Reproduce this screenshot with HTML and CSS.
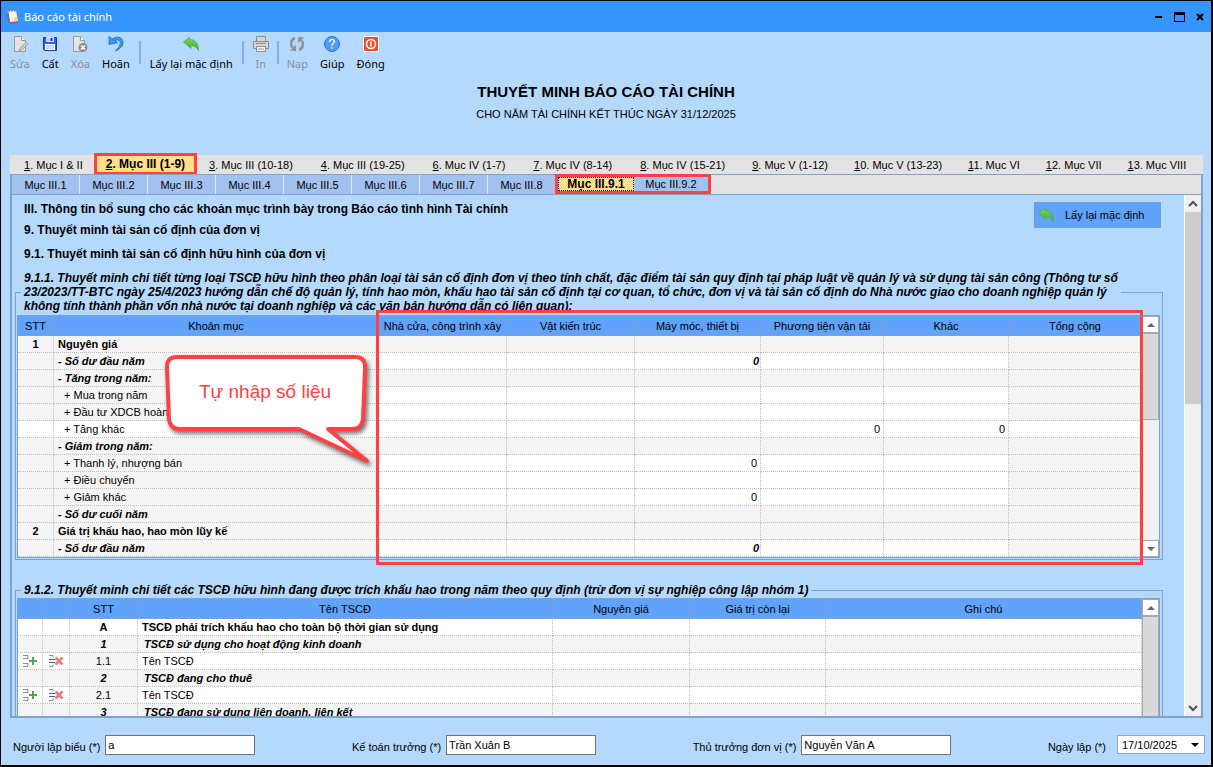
FILE: index.html
```html
<!DOCTYPE html>
<html lang="vi">
<head>
<meta charset="utf-8">
<title>Báo cáo tài chính</title>
<link rel="stylesheet" href="styles.css">
</head>
<body>
<svg class="defs" aria-hidden="true">
  <defs>
    <linearGradient id="green" x1="0" y1="0" x2="0" y2="1"><stop offset="0" stop-color="#7fd85a"/><stop offset="1" stop-color="#3fa83a"/></linearGradient>
    <symbol id="reply" viewBox="0 0 16 16"><path d="M.5 6 6.500 1.200v2.300C12 3.500 15.500 7 15.500 14.500 13.500 10.800 11 9.700 8 9.700V12.500z" fill="url(#green)" stroke="#4caf45" stroke-width=".8"/></symbol>
    <symbol id="row-add" viewBox="0 0 16 14"><path d="M1 1.500h5v3H1M1 9.500h5v3H1" fill="none" stroke="#8b8b8b"/><path d="M7 7h8M11 3v8" stroke="#4aa85a" stroke-width="2"/></symbol>
    <symbol id="row-del" viewBox="0 0 16 14"><path d="M1 1.500h4v2M1 12.500h4v-2" fill="none" stroke="#8b8b8b"/><path d="M1 5.500h6M1 8.500h6" stroke="#3b5fb5"/><path d="m7.500 3.500 7 7m0-7-7 7" stroke="#ee7b7b" stroke-width="2.600"/></symbol>
    <symbol id="up" viewBox="0 0 8 4"><path d="M0 4 4 0l4 4z" fill="#666"/></symbol>
    <symbol id="down" viewBox="0 0 8 4"><path d="M0 0h8L4 4z" fill="#666"/></symbol>
  </defs>
</svg>
<div class="window">
  <header class="titlebar">
    <svg width="14" height="16" viewBox="0 0 14 16"><path d="m1 3 2 11 3 1 8-1-2-10z" fill="#8463b5"/><path d="m2 2 9-.5L13 12l-8 1z" fill="#fff8e2"/><path d="m2 2 2 10 1 1L3.500 3z" fill="#4470c4"/><path d="m9 9 3-1 .8 4-3 .5z" fill="#f3d675"/><path d="M4 3V.5M7 3V.5M10 3V.5" stroke="#7d6b54"/></svg>
    <h1 class="titlebar-text">Báo cáo tài chính</h1>
    <div class="window-buttons">
      <button aria-label="Thu nhỏ"><svg width="12" height="12"><path d="M3 6h7" stroke="#000" stroke-width="2"/></svg></button>
      <button aria-label="Phóng to"><svg width="12" height="12"><path d="M1.500 1.500h10v9h-10z" fill="none" stroke="#000"/><path d="M1 2.500h11" stroke="#000" stroke-width="3"/></svg></button>
      <button aria-label="Đóng cửa sổ"><svg width="12" height="12"><path d="m3 3 6 6m0-6L3 9" stroke="#000" stroke-width="2.200"/></svg></button>
    </div>
  </header>

  <nav class="toolbar">
    <button disabled><svg width="16" height="16"><path d="M2.500.5h7l4 4v11h-11z" fill="#e4e4e4" stroke="#999"/><path d="M9.500.5v4h4" fill="#fff" stroke="#999"/><path d="m7 15 1-3 6-6 2 2-6 6z" fill="#c9c9c9" stroke="#999" stroke-width=".7"/></svg>Sửa</button>
    <button><svg width="16" height="16"><path d="M1.500 1.500h13v13h-12l-1-1z" fill="#2d62e8" stroke="#1237bd"/><path d="M4 1h8v5H4z" fill="#c7d6f5"/><path d="M8.500 2h2v3h-2z" fill="#1237bd"/><path d="M3 8h10v6H3z" fill="#fff"/><path d="M4 10h8M4 12h8" stroke="#9fb4df"/></svg>Cất</button>
    <button disabled><svg width="16" height="16"><path d="M1.500.5h7l4 4v11h-11z" fill="#e4e4e4" stroke="#999"/><path d="M8.500.5v4h4" fill="#fff" stroke="#999"/><circle cx="11" cy="11.500" r="4.500" fill="#8c8c8c"/><path d="m9 9.500 4 4m0-4-4 4" stroke="#fff" stroke-width="1.500"/></svg>Xóa</button>
    <button><svg width="16" height="16"><path d="M1 .5v8l8.500-1.800-2.600-1.900C10 2.800 13 5 12 8.500c-.6 2.500-2.500 4-4.500 6.500C12 13 15 10 15 6.500 15 .8 8.500-.2 4.300 3z" fill="#3a9bea" stroke="#1c68b8" stroke-width=".8"/></svg>Hoãn</button>
    <span class="divider wide"></span>
    <button><svg width="16" height="16"><use href="#reply"/></svg>Lấy lại mặc định</button>
    <span class="divider wide"></span>
    <button disabled><svg width="16" height="16"><path d="M3.500.5h9v5h-9zM.5 5.500h15v7H.5z" fill="#d4d4d4" stroke="#8d8d8d"/><path d="M3 7.500h10" stroke="#8d8d8d"/><path d="M3.500 10.500h9v5h-9z" fill="#f5f5f5" stroke="#8d8d8d"/><path d="M5 13h6" stroke="#999"/></svg>In</button>
    <span class="divider"></span>
    <button disabled><svg width="16" height="16"><path d="M6 2C1.500 3.500 1 9 4 12M10 14c4.500-1.500 5-7 2-10" fill="none" stroke="#929292" stroke-width="2.400"/><path d="M.8 14.500 7 15V9zM15.200 1.500 9 1v6z" fill="#929292"/></svg>Nạp</button>
    <button><svg width="16" height="16"><circle cx="8" cy="8" r="7.500" fill="#519cf2" stroke="#2877d5"/><path d="M5.700 6C5.800 2.500 10.500 2.700 10.300 5.600 10.200 7.400 8 7.500 8 9.800M8 11.200v1.600" fill="none" stroke="#fff" stroke-width="1.300"/></svg>Giúp</button>
    <button><svg width="16" height="16"><rect x=".5" y=".5" width="15" height="15" rx="1.500" fill="#e4512b" stroke="#fff"/><circle cx="8" cy="8" r="4.500" fill="none" stroke="#fff" stroke-width="1.500"/><path d="M8 5.500v5" stroke="#fff" stroke-width="1.600"/></svg>Đóng</button>
  </nav>

  <div class="report-title">
    <h2>THUYẾT MINH BÁO CÁO TÀI CHÍNH</h2>
    <p>CHO NĂM TÀI CHÍNH KẾT THÚC NGÀY 31/12/2025</p>
  </div>

  <main class="report">
    <nav class="tabs">
      <button><u>1</u>. Mục I &amp; II</button>
      <button class="active"><u>2</u>. Mục III (1-9)</button>
      <button><u>3</u>. Mục III (10-18)</button>
      <button><u>4</u>. Mục III (19-25)</button>
      <button><u>6</u>. Mục IV (1-7)</button>
      <button><u>7</u>. Mục IV (8-14)</button>
      <button><u>8</u>. Mục IV (15-21)</button>
      <button class="narrow"><u>9</u>. Mục V (1-12)</button>
      <button class="narrow"><u>1</u>0. Mục V (13-23)</button>
      <button class="narrow"><u>1</u>1. Mục VI</button>
      <button class="narrow"><u>1</u>2. Mục VII</button>
      <button class="narrow"><u>1</u>3. Mục VIII</button>
    </nav>
    <section class="pane">
      <nav class="subtabs">
        <button>Mục III.1</button>
        <button>Mục III.2</button>
        <button>Mục III.3</button>
        <button>Mục III.4</button>
        <button>Mục III.5</button>
        <button>Mục III.6</button>
        <button>Mục III.7</button>
        <button>Mục III.8</button>
        <div class="marked">
          <button class="active">Mục III.9.1</button>
          <button>Mục III.9.2</button>
        </div>
      </nav>
      <div class="viewport">
        <div class="content">
          <div class="intro">
            <div class="headings">
              <h3>III. Thông tin bổ sung cho các khoản mục trình bày trong Báo cáo tình hình Tài chính</h3>
              <h3>9. Thuyết minh tài sản cố định của đơn vị</h3>
              <h3 class="spaced">9.1. Thuyết minh tài sản cố định hữu hình của đơn vị</h3>
            </div>
            <button class="reset"><svg width="16" height="16"><use href="#reply"/></svg><span>Lấy lại mặc định</span></button>
          </div>

          <fieldset class="group">
            <legend>9.1.1. Thuyết minh chi tiết từng loại TSCĐ hữu hình theo phân loại tài sản cố định đơn vị theo tính chất, đặc điểm tài sản quy định tại pháp luật về quản lý và sử dụng tài sản công (Thông tư số<br>23/2023/TT-BTC ngày 25/4/2023 hướng dẫn chế độ quản lý, tính hao mòn, khấu hao tài sản cố định tại cơ quan, tổ chức, đơn vị và tài sản cố định do Nhà nước giao cho doanh nghiệp quản lý<br>không tính thành phần vốn nhà nước tại doanh nghiệp và các văn bản hướng dẫn có liên quan):</legend>
            <div class="grid">
              <table class="assets">
                <colgroup><col class="w-stt"><col class="w-item"><col class="w-house"><col class="w-arch"><col class="w-mach"><col class="w-car"><col class="w-other"><col></colgroup>
                <thead><tr><th>STT</th><th>Khoản mục</th><th>Nhà cửa, công trình xây</th><th>Vật kiến trúc</th><th>Máy móc, thiết bị</th><th>Phương tiện vận tải</th><th>Khác</th><th>Tổng cộng</th></tr></thead>
                <tbody>
                  <tr class="head"><td>1</td><td>Nguyên giá</td><td></td><td></td><td></td><td></td><td></td><td></td></tr>
                  <tr class="sub edit"><td></td><td>- Số dư đầu năm</td><td></td><td></td><td>0</td><td></td><td></td><td></td></tr>
                  <tr class="sub"><td></td><td>- Tăng trong năm:</td><td></td><td></td><td></td><td></td><td></td><td></td></tr>
                  <tr class="edit"><td></td><td>+ Mua trong năm</td><td></td><td></td><td></td><td></td><td></td><td></td></tr>
                  <tr class="edit"><td></td><td>+ Đầu tư XDCB hoàn</td><td></td><td></td><td></td><td></td><td></td><td></td></tr>
                  <tr class="current"><td></td><td>+ Tăng khác</td><td></td><td></td><td></td><td>0</td><td>0</td><td></td></tr>
                  <tr class="sub"><td></td><td>- Giảm trong năm:</td><td></td><td></td><td></td><td></td><td></td><td></td></tr>
                  <tr class="edit"><td></td><td>+ Thanh lý, nhượng bán</td><td></td><td></td><td>0</td><td></td><td></td><td></td></tr>
                  <tr class="edit"><td></td><td>+ Điều chuyển</td><td></td><td></td><td></td><td></td><td></td><td></td></tr>
                  <tr class="edit"><td></td><td>+ Giảm khác</td><td></td><td></td><td>0</td><td></td><td></td><td></td></tr>
                  <tr class="sub"><td></td><td>- Số dư cuối năm</td><td></td><td></td><td></td><td></td><td></td><td></td></tr>
                  <tr class="head"><td>2</td><td>Giá trị khấu hao, hao mòn lũy kế</td><td></td><td></td><td></td><td></td><td></td><td></td></tr>
                  <tr class="sub edit"><td></td><td>- Số dư đầu năm</td><td></td><td></td><td>0</td><td></td><td></td><td></td></tr>
                </tbody>
              </table>
              <div class="scroll">
                <button aria-label="Cuộn lên"><svg width="8" height="4"><use href="#up"/></svg></button>
                <div class="thumb"></div>
                <div class="track"></div>
                <button aria-label="Cuộn xuống"><svg width="8" height="4"><use href="#down"/></svg></button>
              </div>
              <div class="highlight"></div>
              <div class="callout">
                <svg width="216" height="120"><path d="M14 4h178q10 0 10 10l-2 52q-1 10-11 10h-24l39 32-68-32H17Q7 76 6 66L4 14Q4 4 14 4z" fill="#fff" stroke="#fd4145" stroke-width="4" stroke-linejoin="round"/></svg>
                <p>Tự nhập số liệu</p>
              </div>
            </div>
          </fieldset>

          <fieldset class="group second">
            <legend>9.1.2. Thuyết minh chi tiết các TSCĐ hữu hình đang được trích khấu hao trong năm theo quy định (trừ đơn vị sự nghiệp công lập nhóm 1)</legend>
            <div class="grid">
              <table class="depreciation">
                <colgroup><col class="w-add"><col class="w-del"><col class="w-no"><col class="w-name"><col class="w-cost"><col class="w-left"><col></colgroup>
                <thead><tr><th></th><th></th><th>STT</th><th>Tên TSCĐ</th><th>Nguyên giá</th><th>Giá trị còn lại</th><th>Ghi chú</th></tr></thead>
                <tbody>
                  <tr class="head line"><td></td><td></td><td>A</td><td>TSCĐ phải trích khấu hao cho toàn bộ thời gian sử dụng</td><td></td><td></td><td></td></tr>
                  <tr class="sub"><td></td><td></td><td>1</td><td>TSCĐ sử dụng cho hoạt động kinh doanh</td><td></td><td></td><td></td></tr>
                  <tr class="line item"><td><button aria-label="Thêm dòng"><svg width="16" height="14"><use href="#row-add"/></svg></button></td><td><button aria-label="Xóa dòng"><svg width="16" height="14"><use href="#row-del"/></svg></button></td><td>1.1</td><td>Tên TSCĐ</td><td></td><td></td><td></td></tr>
                  <tr class="sub"><td></td><td></td><td>2</td><td>TSCĐ đang cho thuê</td><td></td><td></td><td></td></tr>
                  <tr class="line item"><td><button aria-label="Thêm dòng"><svg width="16" height="14"><use href="#row-add"/></svg></button></td><td><button aria-label="Xóa dòng"><svg width="16" height="14"><use href="#row-del"/></svg></button></td><td>2.1</td><td>Tên TSCĐ</td><td></td><td></td><td></td></tr>
                  <tr class="sub"><td></td><td></td><td>3</td><td>TSCĐ đang sử dụng liên doanh, liên kết</td><td></td><td></td><td></td></tr>
                </tbody>
              </table>
              <div class="scroll">
                <button aria-label="Cuộn lên"><svg width="8" height="4"><use href="#up"/></svg></button>
                <div class="thumb full"></div>
              </div>
            </div>
          </fieldset>
        </div>
        <div class="page-scroll">
          <button aria-label="Lên"><svg width="10" height="8"><path d="m1 6 4-4 4 4" fill="none" stroke="#505050" stroke-width="2"/></svg></button>
          <div class="page-thumb"></div>
          <div class="track"></div>
          <button aria-label="Xuống"><svg width="10" height="8"><path d="m1 2 4 4 4-4" fill="none" stroke="#505050" stroke-width="2"/></svg></button>
        </div>
      </div>
    </section>
  </main>

  <footer class="signers">
    <div class="field"><label for="maker">Người lập biểu (*)</label><input id="maker" value="a"></div>
    <div class="field"><label for="chief">Kế toán trưởng (*)</label><input id="chief" value="Trần Xuân B"></div>
    <div class="field"><label for="head">Thủ trưởng đơn vị (*)</label><input id="head" value="Nguyễn Văn A"></div>
    <div class="field wide"><label for="date">Ngày lập (*)</label>
      <span class="date"><select id="date"><option>17/10/2025</option></select><svg width="8" height="4"><path d="M0 0h8L4 4z"/></svg></span>
    </div>
  </footer>
</div>
</body>
</html>
```

FILE: styles.css
```css
* { box-sizing: border-box; }

body {
  margin: 0;
  font: 11px/14px "Liberation Sans", Arial, sans-serif;
  color: #000;
}

h1, h2, h3, p { margin: 0; font-size: inherit; }
button, input, select { font: inherit; color: inherit; }
button { border: 0; padding: 0; background: none; }
svg { display: block; flex: none; }
.defs { position: absolute; width: 0; height: 0; }

.window {
  height: 100vh;
  display: flex;
  flex-direction: column;
  border: solid #000;
  border-width: 1px 2px 2px 1px;
  background: #b5d9fd;
  overflow: hidden;
}

/* Title bar */
.titlebar {
  flex: none;
  height: 31px;
  display: flex;
  align-items: center;
  gap: 5px;
  padding: 0 5px 0 4px;
  background: #3695fd;
  color: #fff;
}
.titlebar-text { flex: 1; font: 11px/16px "Noto Sans", sans-serif; }
.window-buttons { display: flex; gap: 9px; }

/* Toolbar */
.toolbar {
  flex: none;
  display: flex;
  gap: 12px;
  padding: 4px 9px 0;
}
.toolbar button {
  display: flex;
  flex-direction: column;
  align-items: center;
  gap: 3px;
  font: 11px/18px "Noto Sans", sans-serif;
  white-space: nowrap;
}
.toolbar button:disabled { color: #8b9096; }
.divider { width: 2px; height: 23px; margin: 5px -4px 0; background: #86aee0; }
.divider.wide { margin: 5px -3px 0; }

.report-title {
  flex: none;
  padding: 10px 0 34px;
  text-align: center;
}
.report-title h2 { font-size: 15px; line-height: 18px; }
.report-title p { margin-top: 6px; }

/* Tabs */
.report {
  flex: 1;
  min-height: 0;
  display: flex;
  flex-direction: column;
  padding: 0 8px 0 9px;
}
.tabs { flex: none; display: flex; height: 19px; background: #e3e3e3; white-space: nowrap; }
.tabs button { padding: 0 14px; }
.tabs .narrow { padding: 0 13px; }
.tabs .active {
  margin: -2px -2px -1px -3px;
  padding: 0 9px;
  border: 3px solid #fd4145;
  background: #ffdf8e;
  font-size: 12px;
  font-weight: bold;
}
.pane {
  flex: 1;
  min-height: 0;
  display: flex;
  flex-direction: column;
  border: 2px solid #7ea2d0;
  border-top-width: 1px;
}
.subtabs {
  flex: none;
  display: flex;
  height: 20px;
  border-bottom: 1px solid #7ea2d0;
  background: #e3e3e3;
}
.subtabs button { width: 68px; border-right: 1px solid #dfe8f5; background: #a2c1ee; }
.marked { display: flex; border: 3px solid #fd4145; margin: -1px 0 0 -1px; }
.marked button { width: 74px; border: 0; }
.marked .active {
  width: 76px;
  background: #ffdf8e;
  outline: 1px dotted #000;
  outline-offset: -1px;
  font-size: 12px;
  font-weight: bold;
}

/* Scrolling area */
.viewport { flex: 1; min-height: 0; display: flex; }
.content { flex: 1; min-width: 0; padding: 7px 21px 0 3px; overflow: hidden; }
.intro { display: flex; justify-content: space-between; align-items: flex-start; padding: 0 2px 0 9px; }
.headings h3 { margin-bottom: 7px; font-size: 12px; }
.headings .spaced { margin: 10px 0; }
.reset {
  width: 127px;
  height: 26px;
  display: flex;
  align-items: center;
  gap: 11px;
  padding-left: 3px;
  border: 1px solid #6f9ed8;
  background: #61a2fb;
}

.group {
  min-width: 0;
  margin: 0;
  padding: 2px 2px 1px 1px;
  border: 1px solid #7ea2d0;
}
.group legend {
  margin-left: 4px;
  padding: 0 3px;
  font-size: 12px;
  font-weight: bold;
  font-style: italic;
  white-space: nowrap;
}
.group.second { margin-top: 23px; padding-top: 1px; }

/* Grids */
.grid { position: relative; display: flex; border: 1px solid #7ea2d0; background: #f0f0f0; }
.grid table { flex: 1; width: 0; table-layout: fixed; border-spacing: 0; }
th, td {
  height: 17px;
  padding: 0 4px;
  border: dotted #bdbdbd;
  border-width: 0 1px 1px 0;
  line-height: 14px;
  white-space: nowrap;
  overflow: hidden;
}
th {
  height: 20px;
  padding: 0 2px;
  border: solid #7ea2d0;
  border-width: 0 1px 1px 0;
  background: #61a2fb;
  font-weight: normal;
}
td { background: #f4f4f4; }
.head td { font-weight: bold; }
.sub td { font-weight: bold; font-style: italic; }

.w-stt { width: 36px; }
.w-item { width: 325px; }
.w-house { width: 128px; }
.w-arch { width: 128px; }
.w-mach { width: 126px; }
.w-car { width: 123px; }
.w-other { width: 125px; }
.assets td { text-align: right; padding: 0 3px; }
.assets td:first-child { text-align: center; }
.assets td:nth-child(2) { text-align: left; padding-left: 10px; }
.assets .head td:nth-child(2), .assets .sub td:nth-child(2) { padding-left: 4px; }
.assets .sub td { padding-right: 1px; }
.assets .edit td:nth-child(n+3):nth-child(-n+7), .assets .current td { background: #fff; }

.w-add { width: 25px; }
.w-del { width: 27px; }
.w-no { width: 68px; }
.w-name { width: 415px; }
.w-cost { width: 137px; }
.w-left { width: 136px; }
.depreciation .line td { background: #fff; }
.depreciation .item td:nth-child(3) { background: #f4f4f4; }
.depreciation td:nth-child(-n+3) { text-align: center; padding: 0 2px; }
.depreciation .sub td:nth-child(4) { padding-left: 6px; }
.depreciation button { display: block; margin: 0 auto; }

/* Scroll bars */
.scroll { width: 17px; display: flex; flex-direction: column; }
.scroll button {
  flex: none;
  height: 17px;
  display: grid;
  place-items: center;
  border: 1px solid #a8a8a8;
  background: #fff;
}
.thumb { height: 87px; border: 1px solid #a8a8a8; background: #d9d9d9; }
.thumb.full { flex: 1; margin-bottom: 4px; }
.track { flex: 1; }
.page-scroll { flex: none; width: 17px; display: flex; flex-direction: column; border-left: 1px solid #fff; background: #f0f0f0; }
.page-scroll button { height: 17px; display: grid; place-items: center; }
.page-thumb { height: 192px; background: #cdcdcd; }

/* Annotations lying over the first grid */
.highlight { position: absolute; inset: -6px 16px -8px 358px; border: 3px solid #fd4145; }
.callout { position: absolute; left: 145px; top: 37px; width: 216px; }
.callout svg { filter: drop-shadow(2px 3px 2px #00000088); }
.callout p {
  position: absolute;
  inset: 28px 14px auto 2px;
  text-align: center;
  color: #fd4145;
  font-size: 19px;
  line-height: 22px;
}

/* Footer */
.signers {
  flex: none;
  display: flex;
  justify-content: space-between;
  align-items: center;
  height: 47px;
  padding: 6px 6px 0 12px;
}
.field { display: flex; align-items: center; gap: 5px; }
.field.wide { gap: 11px; }
.field label { padding-top: 5px; white-space: nowrap; }
.field input { width: 150px; height: 20px; padding: 0 2px; border: 1px solid #737373; background: #fff; }
.date { display: flex; align-items: center; width: 88px; height: 19px; padding-right: 5px; border: 1px solid #8ba3e3; background: #fff; }
.date select { flex: 1; min-width: 0; padding: 0 4px; border: 0; background: none; appearance: none; }
```
